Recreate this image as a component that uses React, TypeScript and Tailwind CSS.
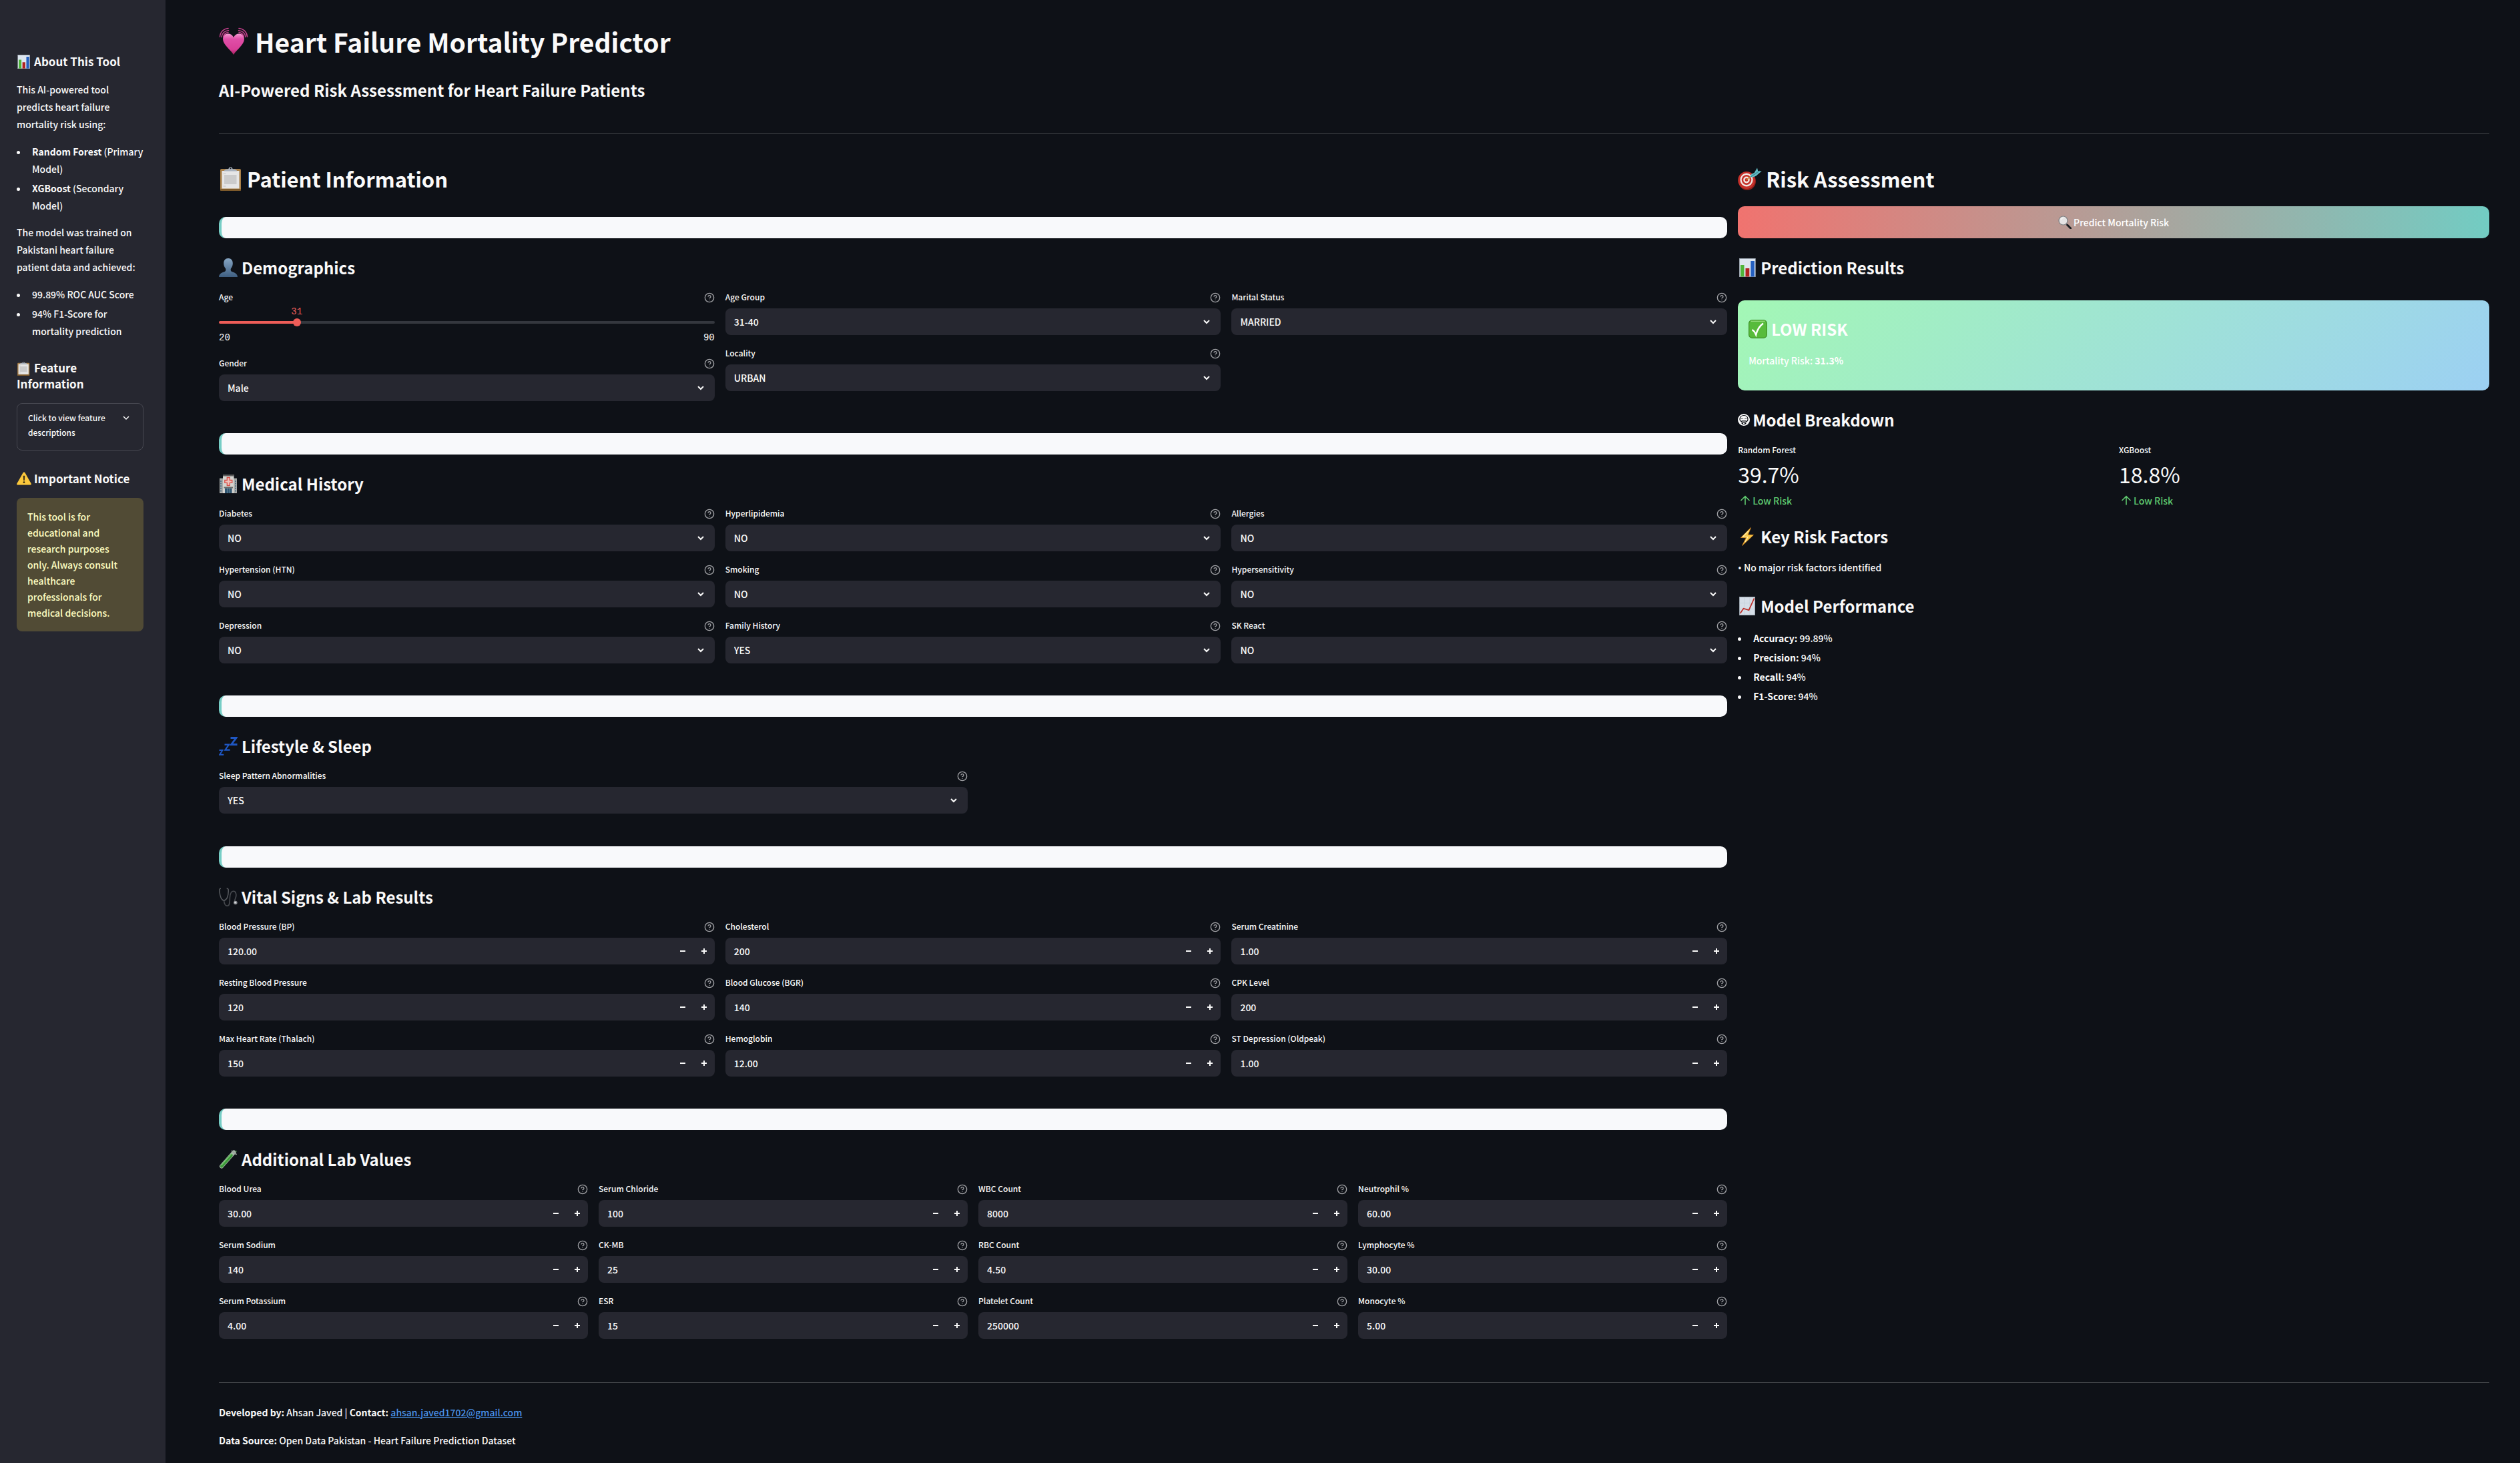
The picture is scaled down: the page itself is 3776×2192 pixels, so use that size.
import { useId, useState, type ReactNode } from 'react';

/* ---------- Icons ---------- */

type IconProps = { className?: string };

function HeartIcon({ className }: IconProps) {
  return (
    <svg viewBox="0 0 44 44" className={className} aria-hidden="true">
      <defs>
        <linearGradient id="heart" x1="0" y1="0" x2="0" y2="1">
          <stop offset="0" stopColor="#f59ad2" />
          <stop offset="0.25" stopColor="#e04fa8" />
          <stop offset="0.75" stopColor="#d93f98" />
          <stop offset="1" stopColor="#a81f5c" />
        </linearGradient>
      </defs>
      <path d="M22 42C18 35 6 27 6 18.500 C6 13.500 9.500 10.500 13.700 10.500 C17.500 10.500 20.500 12.500 22 16 C23.500 12.500 26.500 10.500 30.300 10.500 C34.500 10.500 38 13.500 38 18.500 C38 27 26 35 22 42Z" fill="url(#heart)" />
      <g fill="none" stroke="#c9418f" strokeWidth="1.500" strokeLinecap="round">
        <path d="M1.500 15C2 8 7 3 14 2.500M4 15.500C4.700 10 8.500 6 14.500 5.700M6.600 15C7.500 11.500 10 9 14 8.700" />
        <path d="M42.500 15C42 8 37 3 30 2.500M40 15.500C39.300 10 35.500 6 29.500 5.700M37.400 15C36.500 11.500 34 9 30 8.700" />
      </g>
    </svg>
  );
}

function ClipboardIcon({ className }: IconProps) {
  return (
    <svg viewBox="0 0 36 36" className={className} aria-hidden="true">
      <rect x="2" y="3" width="31" height="33" rx="2" fill="#a98048" />
      <rect x="2" y="33" width="31" height="3" rx="1.500" fill="#7d5a2b" />
      <rect x="4.500" y="6" width="26" height="26.500" fill="#e6e6e6" />
      <rect x="8" y="12" width="18.500" height="14" fill="#cbcbcb" />
      <path d="M6.500 10.500h4M6.500 29h4" stroke="#c2c2c2" />
      <path d="M8 6.500c0-3 3-2.700 6-3.300C15 2.800 15 .3 17.500 .3S20 2.800 21 3.200c3 .6 6 .3 6 3.300z" fill="#aab3bf" />
      <circle cx="17.500" cy="2.300" r="1" fill="#0e1117" />
    </svg>
  );
}

function PersonIcon({ className }: IconProps) {
  return (
    <svg viewBox="0 0 28 28" className={className} aria-hidden="true">
      <defs>
        <linearGradient id="person" x1="0" y1="0" x2="0" y2="1">
          <stop offset="0" stopColor="#86a6c4" />
          <stop offset="1" stopColor="#3f5f82" />
        </linearGradient>
      </defs>
      <path d="M14 0c4.500 0 6.800 3.300 6.800 7.600 0 3-1 5.600-2.600 7.500-.8 1-.8 3.600.6 4.700 2.500 1.500 8.700 1.700 9.200 8.200H0c.5-6.500 6.700-6.700 9.200-8.200 1.400-1.100 1.400-3.700.6-4.700C8.200 13.200 7.200 10.600 7.200 7.600 7.200 3.300 9.500 0 14 0z" fill="url(#person)" />
    </svg>
  );
}

function HospitalIcon({ className }: IconProps) {
  return (
    <svg viewBox="0 0 28 28" className={className} aria-hidden="true">
      <rect x="1" y="5" width="26" height="23" fill="#a7a9a8" />
      <rect x="1" y="5" width="26" height="2" fill="#6f7271" />
      <rect x="6" y="0" width="16.500" height="28" fill="#d5d4d0" />
      <rect x="6" y="0" width="16.500" height="2.500" fill="#5e5e5e" />
      <path d="M3 9v17M25 9v17" stroke="#476b80" strokeWidth="1.800" strokeDasharray="2 1.600" />
      <path d="M12.300 4.500h4v4h3.500v3.800h-3.500v4.200h-4v-4.200H8.800V8.500h3.500z" fill="#f0c3bd" stroke="#d94f48" strokeWidth="1.300" />
      <rect x="7.500" y="18.500" width="13.500" height="2" fill="#6b6b69" />
      <rect x="9" y="20.500" width="10.500" height="7.500" fill="#2f5570" />
      <path d="M12.500 20.500V28M16 20.500V28" stroke="#7d9aab" strokeWidth=".7" />
    </svg>
  );
}

function SleepIcon({ className }: IconProps) {
  return (
    <svg viewBox="0 0 28 28" className={className} fill="none" stroke="#1f57c3" aria-hidden="true">
      <path d="M17.500 1.500h8.500l-7.500 10h9" strokeWidth="2.800" />
      <path d="M8.500 11.700h6.500l-5.600 8h7.200" strokeWidth="2.200" />
      <path d="M.5 20h5l-4.300 6.700h6" strokeWidth="1.900" />
    </svg>
  );
}

function StethoscopeIcon({ className }: IconProps) {
  return (
    <svg viewBox="0 0 28 28" className={className} fill="none" aria-hidden="true">
      <path d="M3 1.200C.5 1 .8 3.500 1 6c.5 6 2 12 6.500 13.500C12.500 18 14 12 14.200 6c.1-3 .3-5-2.500-4.800" stroke="#5a5d62" strokeWidth="1.500" />
      <path d="M7.500 19c.5 5 2 8.300 5 8.300 4.500 0 3.500-7 4-13 .4-5 2-9 5.300-9 4 0 5 6 3 10.500-1 2.500-1.500 4-1 5" stroke="#484b50" strokeWidth="1.600" />
      <circle cx="24.800" cy="22.500" r="2.800" fill="#8d9095" />
      <circle cx="24.600" cy="22.300" r="1.200" fill="#e1e3e6" />
    </svg>
  );
}

function TestTubeIcon({ className }: IconProps) {
  return (
    <svg viewBox="0 0 28 28" className={className} fill="none" aria-hidden="true">
      <path d="M4 24.500 22.500 3.500" stroke="#a9b8ab" strokeWidth="6" strokeLinecap="round" />
      <path d="M4.200 24.200 18.500 8" stroke="#3d9a3a" strokeWidth="4.600" strokeLinecap="round" />
      <path d="M4 22.500 19 5.500" stroke="#8fd98a" strokeWidth="1.100" strokeLinecap="round" />
      <path d="M19.500 1.500l6.500 5" stroke="#9aa39b" strokeWidth="1.800" strokeLinecap="round" />
      <circle cx="26" cy="2" r="1" fill="#2f6a35" />
    </svg>
  );
}

function TargetIcon({ className }: IconProps) {
  return (
    <svg viewBox="0 0 36 36" className={className} aria-hidden="true">
      <ellipse cx="14" cy="21.500" rx="13" ry="13.500" fill="#8e1f1b" />
      <ellipse cx="13" cy="20" rx="12.800" ry="13" fill="#c5302a" />
      <ellipse cx="13" cy="19.500" rx="9.600" ry="10" fill="#f1e6e3" />
      <ellipse cx="13" cy="19.500" rx="7.300" ry="7.600" fill="#c5302a" />
      <ellipse cx="13" cy="19.500" rx="4.800" ry="5" fill="#f1e6e3" />
      <circle cx="13" cy="19.500" r="2.400" fill="#c5302a" />
      <path d="M13 19.500 20 13.500" stroke="#c98f2e" strokeWidth="1.600" />
      <path d="M18.500 15.500c0-3.500 2.500-5.500 6-6.500L29 1.500l1.200 4.500 5.500.5-6 5c-2.500 3-7 4.500-11.200 4z" fill="#63b9c2" />
      <path d="M20 14.500 32.500 6" stroke="#2c7d88" strokeWidth="1" />
    </svg>
  );
}

function MagnifierIcon({ className }: IconProps) {
  return (
    <svg viewBox="0 0 20 20" className={className} aria-hidden="true">
      <path d="m11.500 12 2.500 2.500" stroke="#8b8f94" strokeWidth="2" />
      <path d="m13.700 14 5 5" stroke="#1d1f22" strokeWidth="3" strokeLinecap="round" />
      <circle cx="7.500" cy="7.500" r="6.500" fill="#e6e4e4" stroke="#7d8084" strokeWidth="1.200" />
      <path d="M3.800 6.500a4 4 0 0 1 4-3" fill="none" stroke="#fff" />
    </svg>
  );
}

function BarChartIcon({ className }: IconProps) {
  return (
    <svg viewBox="0 0 28 28" className={className} aria-hidden="true">
      <rect x="2.300" y=".3" width="24" height="27.400" fill="#dde6f0" stroke="#9aa3ad" strokeWidth=".6" />
      <rect x="4" y="10" width="5.500" height="17.500" fill="#4fb53a" />
      <rect x="11.500" y="15" width="5.800" height="12.500" fill="#b02320" />
      <rect x="19.300" y="4" width="5.600" height="23.500" fill="#2560c0" />
    </svg>
  );
}

function CheckBoxIcon({ className }: IconProps) {
  return (
    <svg viewBox="0 0 28 28" className={className} aria-hidden="true">
      <rect x=".6" y=".6" width="26.800" height="26.800" rx="5" fill="#57bb3b" stroke="#3f9128" strokeWidth="1.200" />
      <path d="M4 2.200h20" stroke="#93dc7c" strokeWidth="1.400" strokeLinecap="round" />
      <path d="M5.500 15c2.500 1.500 4.500 4.500 5.700 7.500C13 15.500 17 9 22 5.500" fill="none" stroke="#fff" strokeWidth="2.500" />
    </svg>
  );
}

function FaceIcon({ className }: IconProps) {
  return (
    <svg viewBox="0 0 18 18" className={className} aria-hidden="true">
      <circle cx="9" cy="9" r="9" fill="#fafafa" />
      <path d="M3 8.500C3 4.500 5.500 2.500 9 2.500s6 2 6 6c0 2.500-2.500 3.700-6 3.700s-6-1.200-6-3.700z" fill="none" stroke="#0e1117" strokeWidth="1.200" />
      <path d="M4.800 7.500c.5-1.300 2.500-1.300 3 0M10.200 7.500c.5-1.300 2.500-1.300 3 0M5.500 9.700h7" fill="none" stroke="#0e1117" strokeWidth="1" />
      <path d="M5 13.200h8c-.5 2-2 3-4 3s-3.500-1-4-3z" fill="#0e1117" />
      <circle cx="9" cy="14.500" r="1.100" fill="#fafafa" />
    </svg>
  );
}

function BoltIcon({ className }: IconProps) {
  return (
    <svg viewBox="0 0 28 28" className={className} aria-hidden="true">
      <path d="M19.500.5 4.500 15.500l8 .2L6.500 27.500 23.500 11.500l-8.300-.3z" fill="#f7c648" stroke="#d98a1f" strokeWidth=".8" strokeLinejoin="round" />
      <path d="M16.500 5 7.500 14.300l7.500.2-4 7.500" fill="none" stroke="#fff0ac" strokeWidth="1.200" />
    </svg>
  );
}

function TrendIcon({ className }: IconProps) {
  return (
    <svg viewBox="0 0 28 28" className={className} aria-hidden="true">
      <rect x="2.300" y=".3" width="23.400" height="27.400" fill="#d5dee8" stroke="#98a3ae" strokeWidth=".6" />
      <path d="M2.500 9.500h23M2.500 18.500h23M10 .5v27M18 .5v27" stroke="#c3ced9" strokeWidth=".7" />
      <path d="m3.500 25 5-7.300 8 2.500L24.500 2.500" fill="none" stroke="#bd2f2a" strokeWidth="1.800" />
    </svg>
  );
}

function WarningIcon({ className }: IconProps) {
  return (
    <svg viewBox="0 0 22 20" className={className} aria-hidden="true">
      <path d="M11 .5c.8 0 1.300.5 1.700 1.200l8.800 15.600c.8 1.500.1 2.200-1.200 2.200H1.700c-1.300 0-2-.7-1.200-2.200L9.300 1.700C9.700 1 10.200.5 11 .5z" fill="#fbc83c" />
      <path d="M9.700 5.800h2.600l-.5 7.200h-1.600z" fill="#3b2f14" />
      <circle cx="11" cy="15.700" r="1.400" fill="#3b2f14" />
    </svg>
  );
}

function HelpIcon() {
  return (
    <svg viewBox="0 0 24 24" className="mt-1 size-4 shrink-0 text-[#a0a1a5]" fill="none" stroke="currentColor" strokeWidth="2" strokeLinecap="round" strokeLinejoin="round" aria-hidden="true">
      <circle cx="12" cy="12" r="10" />
      <path d="M9.090 9a3 3 0 0 1 5.830 1c0 2-3 3-3 3M12 17h.01" />
    </svg>
  );
}

function ChevronIcon({ className }: IconProps) {
  return (
    <svg viewBox="0 0 18 18" className={className} fill="none" stroke="currentColor" aria-hidden="true">
      <path d="m5 7 4 4 4-4" />
    </svg>
  );
}

function ArrowUpIcon() {
  return (
    <svg viewBox="0 0 22 22" className="size-[22px]" fill="none" stroke="currentColor" strokeWidth="1.600" aria-hidden="true">
      <path d="M11 17.500V5M4.500 11 11 4.700 17.500 11" />
    </svg>
  );
}

/* ---------- Form fields ---------- */

function FieldLabel({ htmlFor, children }: { htmlFor: string; children: ReactNode }) {
  return (
    <div className="flex h-6 items-start justify-between">
      <label htmlFor={htmlFor} className="text-xs leading-[22px]">{children}</label>
      <HelpIcon />
    </div>
  );
}

function SelectField({ label, value, options }: { label: string; value: string; options?: string[] }) {
  const id = useId();
  return (
    <div>
      <FieldLabel htmlFor={id}>{label}</FieldLabel>
      <div className="relative mt-1">
        <select id={id} defaultValue={value} className="block h-10 w-full appearance-none rounded-lg bg-[#262730] px-[13px] text-sm outline-none">
          {(options ?? ['YES', 'NO']).map((o) => <option key={o}>{o}</option>)}
        </select>
        <ChevronIcon className="pointer-events-none absolute top-[11px] right-3 size-[18px] stroke-2" />
      </div>
    </div>
  );
}

function NumberField({ label, value }: { label: string; value: string }) {
  const id = useId();
  const decimals = value.includes('.') ? 2 : 0;
  const [text, setText] = useState(value);
  const step = (by: number) => setText((Number(text) + by).toFixed(decimals));
  return (
    <div>
      <FieldLabel htmlFor={id}>{label}</FieldLabel>
      <div className="mt-1 flex h-10 rounded-lg bg-[#262730]">
        <input id={id} inputMode="decimal" value={text} onChange={(e) => setText(e.target.value)} className="min-w-0 flex-1 bg-transparent px-[13px] text-sm outline-none" />
        <button type="button" aria-label={`Decrease ${label}`} onClick={() => step(-1)} className="flex w-8 items-center justify-center">
          <svg viewBox="0 0 8 8" className="size-2" aria-hidden="true"><path d="M0 4h8" stroke="currentColor" strokeWidth="2" /></svg>
        </button>
        <button type="button" aria-label={`Increase ${label}`} onClick={() => step(1)} className="flex w-8 items-center justify-center">
          <svg viewBox="0 0 8 8" className="size-2" aria-hidden="true"><path d="M0 4h8M4 0v8" stroke="currentColor" strokeWidth="2" /></svg>
        </button>
      </div>
    </div>
  );
}

function AgeSlider() {
  const id = useId();
  const [age, setAge] = useState(31);
  const pct = ((age - 20) / 70) * 100;
  return (
    <div className="pb-[3px]">
      <FieldLabel htmlFor={id}>Age</FieldLabel>
      <div className="relative mt-px h-4 font-['Liberation_Mono',monospace] text-sm leading-4 text-[#ee5d58]">
        <output htmlFor={id} className="absolute -translate-x-1/2" style={{ left: `${pct}%` }}>{age}</output>
      </div>
      <div className="mt-0.5 grid items-center">
        <div className="h-1 rounded-full [grid-area:1/1]" style={{ background: `linear-gradient(to right, #ee5d58 ${pct}%, #34373e ${pct}%)` }} />
        <input
          id={id}
          type="range"
          min={20}
          max={90}
          value={age}
          onChange={(e) => setAge(Number(e.target.value))}
          className="-mx-1.5 h-3 w-[calc(100%+12px)] appearance-none bg-transparent [grid-area:1/1] [&::-webkit-slider-thumb]:size-3 [&::-webkit-slider-thumb]:appearance-none [&::-webkit-slider-thumb]:rounded-full [&::-webkit-slider-thumb]:bg-[#ee5d58]"
        />
      </div>
      <div className="mt-[9px] flex justify-between font-['Liberation_Mono',monospace] text-sm leading-4">
        <span>20</span>
        <span>90</span>
      </div>
    </div>
  );
}

/* ---------- Layout pieces ---------- */

function Heading({ icon, small, children }: { icon?: ReactNode; small?: boolean; children: ReactNode }) {
  return (
    <h3 className={small ? 'flex items-center gap-1 text-2xl leading-[34px] font-bold' : 'flex items-center gap-1.5 text-2xl leading-[34px] font-bold'}>
      {icon}
      {children}
    </h3>
  );
}

function Section({ icon, title, children }: { icon: ReactNode; title: string; children: ReactNode }) {
  return (
    <section className="mb-12">
      <div className="mb-[27px] h-8 rounded-[10px] border-l-4 border-[#76cdc5] bg-[#f8f9fb]" />
      <Heading icon={icon}>{title}</Heading>
      <div className="mt-4">{children}</div>
    </section>
  );
}

function FieldColumns({ columns, kind }: { columns: [string, string][][]; kind: 'select' | 'number' }) {
  return (
    <div className="flex gap-4">
      {columns.map((col, i) => (
        <div key={i} className="flex flex-1 flex-col gap-4">
          {col.map(([label, value]) =>
            kind === 'select'
              ? <SelectField key={label} label={label} value={value} />
              : <NumberField key={label} label={label} value={value} />,
          )}
        </div>
      ))}
    </div>
  );
}

function Bullet({ children }: { children: ReactNode }) {
  return (
    <li className="flex gap-[18px] before:mt-[12px] before:size-[5px] before:shrink-0 before:rounded-full before:bg-[#fafafa]">
      <span>{children}</span>
    </li>
  );
}

function Metric({ label, value, delta }: { label: string; value: string; delta: string }) {
  return (
    <div className="flex-1">
      <div className="text-xs leading-5">{label}</div>
      <div className="mt-1 text-[32px] leading-[44px] font-normal">{value}</div>
      <div className="mt-1.5 flex items-center leading-6 text-[#5fca6f]">
        <ArrowUpIcon />
        {delta}
      </div>
    </div>
  );
}

function Sidebar() {
  return (
    <aside className="w-[248px] shrink-0 bg-[#262730] pt-20 pr-[33px] pl-[25px]">
      <h3 className="flex items-center gap-[5px] text-[17px] leading-6 font-bold">
        <BarChartIcon className="size-[21px]" />
        About This Tool
      </h3>
      <p className="mt-[17px]">This AI-powered tool predicts heart failure mortality risk using:</p>
      <ul className="mt-[15px] flex flex-col gap-[3px]">
        <Bullet><b>Random Forest</b> (Primary Model)</Bullet>
        <Bullet><b>XGBoost</b> (Secondary Model)</Bullet>
      </ul>
      <p className="mt-3.5">The model was trained on Pakistani heart failure patient data and achieved:</p>
      <ul className="mt-[15px] flex flex-col gap-[3px]">
        <Bullet>99.89% ROC AUC Score</Bullet>
        <Bullet>94% F1-Score for mortality prediction</Bullet>
      </ul>
      <h3 className="mt-[30px] text-[17px] leading-6 font-bold">
        <ClipboardIcon className="mr-[5px] inline-block size-[21px] align-text-bottom" />
        Feature Information
      </h3>
      <button type="button" className="mt-[17px] flex w-full items-start justify-between rounded-lg border border-[#474851] pt-2.5 pr-4 pb-[15px] pl-4 text-left text-xs leading-[22px]">
        <span>Click to view feature descriptions</span>
        <ChevronIcon className="mt-0.5 size-[18px] shrink-0 [stroke-width:1.5]" />
      </button>
      <h3 className="mt-[30px] flex items-center gap-1 text-[17px] leading-6 font-bold">
        <WarningIcon className="h-5 w-[22px]" />
        Important Notice
      </h3>
      <div className="mt-[17px] rounded-lg bg-[#514b35] p-4 leading-6 text-[#ffffc2]">
        This tool is for educational and research purposes only. Always consult healthcare professionals for medical decisions.
      </div>
    </aside>
  );
}

const medical: [string, string][][] = [
  [['Diabetes', 'NO'], ['Hypertension (HTN)', 'NO'], ['Depression', 'NO']],
  [['Hyperlipidemia', 'NO'], ['Smoking', 'NO'], ['Family History', 'YES']],
  [['Allergies', 'NO'], ['Hypersensitivity', 'NO'], ['SK React', 'NO']],
];

const vitals: [string, string][][] = [
  [['Blood Pressure (BP)', '120.00'], ['Resting Blood Pressure', '120'], ['Max Heart Rate (Thalach)', '150']],
  [['Cholesterol', '200'], ['Blood Glucose (BGR)', '140'], ['Hemoglobin', '12.00']],
  [['Serum Creatinine', '1.00'], ['CPK Level', '200'], ['ST Depression (Oldpeak)', '1.00']],
];

const labs: [string, string][][] = [
  [['Blood Urea', '30.00'], ['Serum Sodium', '140'], ['Serum Potassium', '4.00']],
  [['Serum Chloride', '100'], ['CK-MB', '25'], ['ESR', '15']],
  [['WBC Count', '8000'], ['RBC Count', '4.50'], ['Platelet Count', '250000']],
  [['Neutrophil %', '60.00'], ['Lymphocyte %', '30.00'], ['Monocyte %', '5.00']],
];

export default function App() {
  return (
    <div className="flex min-h-screen bg-[#0e1117] font-['Noto_Sans_CJK_SC','Noto_Sans',sans-serif] text-sm leading-[26px] font-medium text-[#fafafa]">
      <Sidebar />
      <main className="min-w-0 flex-1 pt-9 pr-[46px] pl-20">
        <h1 className="flex items-center gap-2.5 text-[39px] leading-[52px] font-bold">
          <HeartIcon className="size-11" />
          Heart Failure Mortality Predictor
        </h1>
        <div className="mt-[30px]"><Heading>AI-Powered Risk Assessment for Heart Failure Patients</Heading></div>
        <hr className="mt-12 border-[#44474b]" />

        <div className="mt-[45px] flex gap-4">
          <div className="min-w-0 flex-[1_1_calc(66.67%-16px)]">
            <h2 className="mb-[35px] flex items-center gap-1.5 text-[31px] leading-[44px] font-bold">
              <ClipboardIcon className="size-9" />
              Patient Information
            </h2>

            <Section icon={<PersonIcon className="size-7" />} title="Demographics">
              <div className="grid grid-cols-3 items-start gap-4">
                <div className="flex flex-col gap-4">
                  <AgeSlider />
                  <SelectField label="Gender" value="Male" options={['Male', 'Female']} />
                </div>
                <div className="flex flex-col gap-4">
                  <SelectField label="Age Group" value="31-40" options={['21-30', '31-40', '41-50', '51-60', '61-70']} />
                  <SelectField label="Locality" value="URBAN" options={['URBAN', 'RURAL']} />
                </div>
                <SelectField label="Marital Status" value="MARRIED" options={['MARRIED', 'SINGLE']} />
              </div>
            </Section>

            <Section icon={<HospitalIcon className="size-7" />} title="Medical History">
              <FieldColumns columns={medical} kind="select" />
            </Section>

            <Section icon={<SleepIcon className="size-7" />} title="Lifestyle &amp; Sleep">
              <div className="grid grid-cols-2 gap-4 pb-px">
                <SelectField label="Sleep Pattern Abnormalities" value="YES" />
              </div>
            </Section>

            <Section icon={<StethoscopeIcon className="size-7" />} title="Vital Signs &amp; Lab Results">
              <FieldColumns columns={vitals} kind="number" />
            </Section>

            <Section icon={<TestTubeIcon className="size-7" />} title="Additional Lab Values">
              <FieldColumns columns={labs} kind="number" />
            </Section>
          </div>

          <div className="min-w-0 flex-[1_1_calc(33.33%-16px)]">
            <h2 className="mb-[19px] flex items-center gap-1.5 text-[31px] leading-[44px] font-bold">
              <TargetIcon className="size-9" />
              Risk Assessment
            </h2>
            <button type="button" className="mb-[27px] flex h-12 w-full items-center justify-center gap-[3px] rounded-[10px] bg-[linear-gradient(90deg,#f0736f,#72ccc3)] text-white">
              <MagnifierIcon className="size-5" />
              Predict Mortality Risk
            </button>

            <Heading icon={<BarChartIcon className="size-7" />}>Prediction Results</Heading>
            <div className="mt-8 mb-[27px] rounded-[10px] bg-[linear-gradient(135deg,#a3f7b5,#9cd0f3)] px-4 pt-[26px] pb-8 text-white">
              <Heading icon={<CheckBoxIcon className="size-7" />}>LOW RISK</Heading>
              <p className="mt-[17px]">Mortality Risk: <b>31.3%</b></p>
            </div>

            <Heading small icon={<FaceIcon className="size-[18px]" />}>Model Breakdown</Heading>
            <div className="mt-[18px] mb-[25px] flex gap-4">
              <Metric label="Random Forest" value="39.7%" delta="Low Risk" />
              <Metric label="XGBoost" value="18.8%" delta="Low Risk" />
            </div>

            <Heading icon={<BoltIcon className="size-7" />}>Key Risk Factors</Heading>
            <p className="mt-4 mb-[27px]"><span className="font-['Noto_Sans',sans-serif]">• </span>No major risk factors identified</p>

            <Heading icon={<TrendIcon className="size-7" />}>Model Performance</Heading>
            <ul className="mt-[18px] flex flex-col gap-[3px]">
              <Bullet><b>Accuracy:</b> 99.89%</Bullet>
              <Bullet><b>Precision:</b> 94%</Bullet>
              <Bullet><b>Recall:</b> 94%</Bullet>
              <Bullet><b>F1-Score:</b> 94%</Bullet>
            </ul>
          </div>
        </div>

        <hr className="mt-[17px] border-[#44474b]" />
        <footer className="mt-[31px] flex flex-col gap-4">
          <p>
            <b>Developed by:</b> Ahsan Javed | <b>Contact:</b>{' '}
            <a href="mailto:ahsan.javed1702@gmail.com" className="text-[#4a92e8] underline">ahsan.javed1702@gmail.com</a>
          </p>
          <p><b>Data Source:</b> Open Data Pakistan - Heart Failure Prediction Dataset</p>
        </footer>
      </main>
    </div>
  );
}
